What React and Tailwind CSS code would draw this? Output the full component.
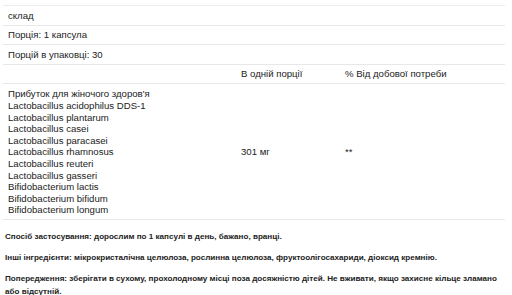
export default function App() {
  const strains = [
    "Прибуток для жіночого здоров'я",
    "Lactobacillus acidophilus DDS-1",
    "Lactobacillus plantarum",
    "Lactobacillus casei",
    "Lactobacillus paracasei",
    "Lactobacillus rhamnosus",
    "Lactobacillus reuteri",
    "Lactobacillus gasseri",
    "Bifidobacterium lactis",
    "Bifidobacterium bifidum",
    "Bifidobacterium longum",
  ];

  const rowClass = "border-b border-[#e8e8e8] px-[5px] py-[3.5px]";

  return (
    <div className="min-h-screen bg-white text-[#222] text-[9.6px] leading-[11.6px] font-['Liberation_Sans',Arial,sans-serif]">
      <div className="ml-[3px] mr-[7px] pt-[5px]">
        {/* Table */}
        <div className="border-t border-[#ececec]">
          <div className={rowClass}>склад</div>
          <div className={rowClass}>Порція: 1 капсула</div>
          <div className={rowClass}>Порцій в упаковці: 30</div>
          <div className={`${rowClass} grid grid-cols-[233px_104px_1fr]`}>
            <div />
            <div>В одній порції</div>
            <div>% Від добової потреби</div>
          </div>
          <div className="border-b border-[#e8e8e8] px-[5px] pt-[4px] pb-[3px] grid grid-cols-[233px_104px_1fr] items-center">
            <div>
              {strains.map((s) => (
                <div key={s}>{s}</div>
              ))}
            </div>
            <div>301 мг</div>
            <div>**</div>
          </div>
        </div>

        {/* Notes */}
        <div className="px-[2px] pt-[10px] font-bold text-[8.1px] leading-[13px] space-y-[8px]">
          <p>Спосіб застосування: дорослим по 1 капсулі в день, бажано, вранці.</p>
          <p>
            Інші інгредієнти: мікрокристалічна целюлоза, рослинна целюлоза,
            фруктоолігосахариди, діоксид кремнію.
          </p>
          <p>
            Попередження: зберігати в сухому, прохолодному місці поза
            досяжністю дітей. Не вживати, якщо захисне кільце зламано або
            відсутній.
          </p>
        </div>
      </div>
    </div>
  );
}
